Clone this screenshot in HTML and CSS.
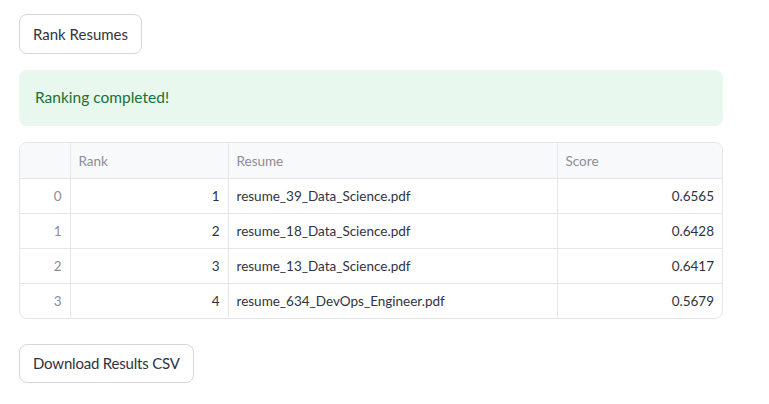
FILE: index.html
```html
<!DOCTYPE html>
<html>
<head>
<meta charset="utf-8">
<link rel="stylesheet" href="styles.css">
</head>
<body>
<main class="page">
  <button class="btn">Rank Resumes</button>
  <div class="alert">Ranking completed!</div>
  <div class="table-wrap">
    <table class="grid">
      <thead>
        <tr>
          <th class="c-idx"></th>
          <th class="c-rank">Rank</th>
          <th class="c-resume">Resume</th>
          <th class="c-score">Score</th>
        </tr>
      </thead>
      <tbody>
        <tr><td class="c-idx">0</td><td class="num">1</td><td>resume_39_Data_Science.pdf</td><td class="num">0.6565</td></tr>
        <tr><td class="c-idx">1</td><td class="num">2</td><td>resume_18_Data_Science.pdf</td><td class="num">0.6428</td></tr>
        <tr><td class="c-idx">2</td><td class="num">3</td><td>resume_13_Data_Science.pdf</td><td class="num">0.6417</td></tr>
        <tr><td class="c-idx">3</td><td class="num">4</td><td>resume_634_DevOps_Engineer.pdf</td><td class="num">0.5679</td></tr>
      </tbody>
    </table>
  </div>
  <button class="btn btn-download">Download Results CSV</button>
</main>
</body>
</html>
```
FILE: styles.css
```css
* { box-sizing: border-box; }
html, body { margin: 0; padding: 0; background: #fff; }
body {
  font-family: "Lato", "Open Sans", sans-serif;
  color: #31333f;
}
.page {
  width: 704px;
  margin-left: 19px;
  padding-top: 14px;
  display: flex;
  flex-direction: column;
  align-items: flex-start;
  gap: 16px;
}
.btn {
  font-family: inherit;
  font-size: 15px;
  color: #31333f;
  background: #fff;
  border: 1px solid #d6d6d9;
  border-radius: 8px;
  height: 40px;
  padding: 0 13px;
  line-height: 1;
}
.btn-download { margin-top: 9px; height: 39px; letter-spacing: -0.2px; }
.alert {
  width: 100%;
  height: 56px;
  background: #e8f8ee;
  color: #177233;
  border-radius: 8px;
  padding: 0 16px 2px;
  display: flex;
  align-items: center;
  font-size: 15.5px;
}
.table-wrap {
  width: 100%;
  border: 1px solid #e6e6ea;
  border-radius: 8px;
  overflow: hidden;
}
.grid {
  width: 100%;
  border-collapse: collapse;
  font-size: 13.5px;
  table-layout: fixed;
}
.grid th, .grid td {
  border-right: 1px solid #e6e6ea;
  border-bottom: 1px solid #e6e6ea;
  padding: 0 8px;
  white-space: nowrap;
}
.grid th:last-child, .grid td:last-child { border-right: none; }
.grid tbody tr:last-child td { border-bottom: none; }
.grid th {
  height: 35px;
  padding-top: 1px;
  background: #f8f9fb;
  color: #8b8d98;
  font-weight: normal;
  text-align: left;
}
.grid td { height: 35px; }
.c-idx { width: 50px; }
.c-rank { width: 158px; }
.c-resume { width: 329px; }
.grid td.c-idx { text-align: right; color: #8b8d98; }
.grid td.num { text-align: right; }
```
